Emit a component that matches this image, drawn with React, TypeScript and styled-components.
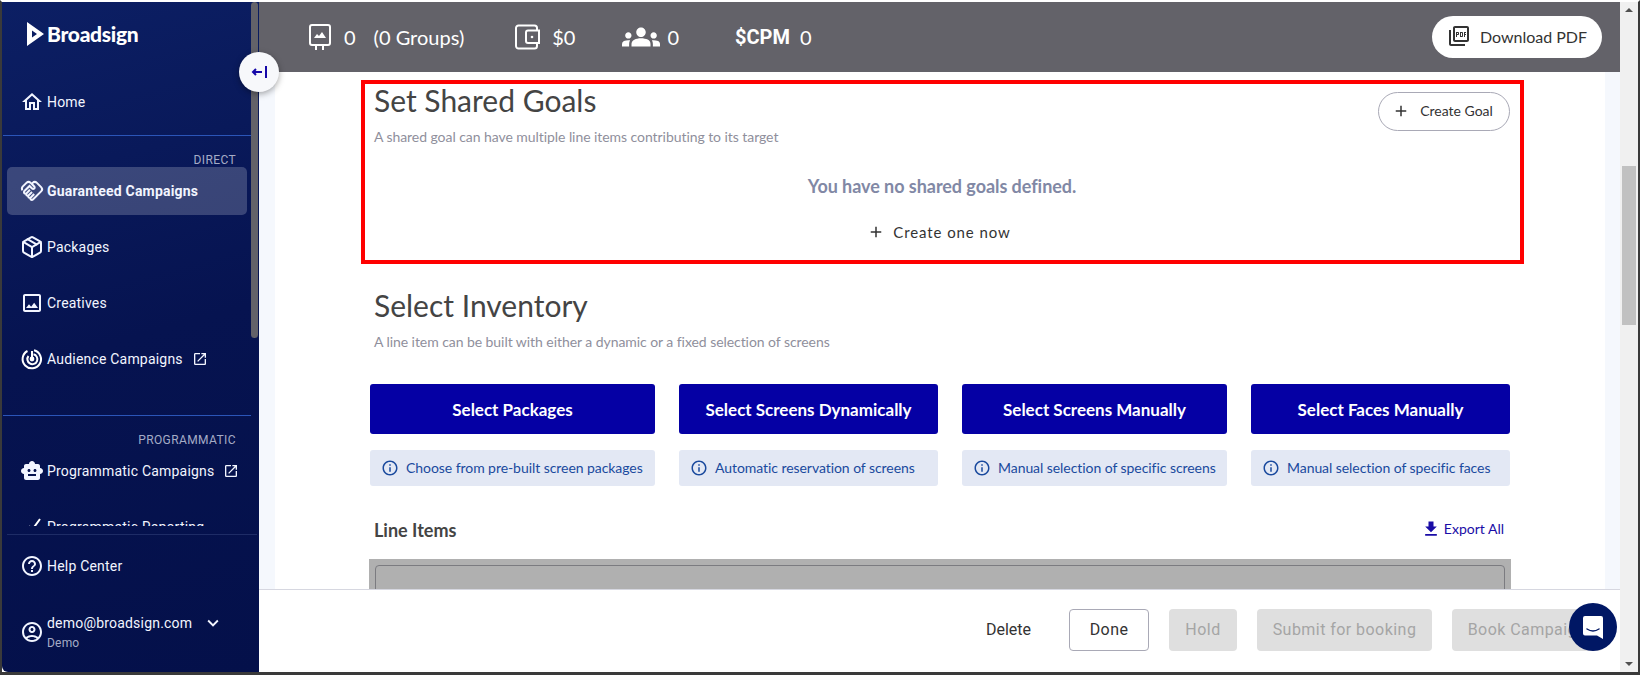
import React from 'react';
import styled, { createGlobalStyle } from 'styled-components';
import {
  MdAdd,
  MdDownload,
  MdExpandMore,
  MdGroups,
  MdHelpOutline,
  MdInfoOutline,
  MdOutlineAccountCircle,
  MdOutlineHandshake,
  MdOutlineHome,
  MdOutlineImage,
  MdOutlineOpenInNew,
  MdOutlinePictureAsPdf,
  MdSmartToy,
} from 'react-icons/md';
import { FiPackage } from 'react-icons/fi';

const GlobalStyle = createGlobalStyle`
  html, body {
    margin: 0;
    padding: 0;
    overflow: hidden;
    background: #fff;
  }
`;

const Window = styled.div`
  position: relative;
  box-sizing: border-box;
  width: 1640px;
  height: 675px;
  display: flex;
  background: #fff;
  border-top: 2px solid #fff;
  border-left: 2px solid #3a3a3a;
  border-right: 2px solid #3a3a3a;
  border-bottom: 3px solid #3a3a3a;
  overflow: hidden;
`;

const Sidebar = styled.aside`
  position: relative;
  flex: 0 0 257px;
  display: flex;
  flex-direction: column;
  color: #f2f5ff;
  font-family: Roboto, sans-serif;
  font-size: 14px;
  letter-spacing: 0.2px;
  background: linear-gradient(165deg, #0c1f64 0%, #061350 50%, #04104a 100%);
  border-bottom-left-radius: 6px;
`;

const SideThumb = styled.div`
  position: absolute;
  top: 0;
  right: 1px;
  width: 7px;
  height: 336px;
  border-radius: 4px;
  background: #636269;
`;

const Nav = styled.nav`
  flex: 0 0 524px;
  overflow: hidden;
`;

const LogoRow = styled.div`
  height: 76px;
  padding: 20px 0 0 25px;
  box-sizing: border-box;
  display: flex;
  align-items: flex-start;
  gap: 3px;
`;

const LogoText = styled.span`
  font-family: Lato, sans-serif;
  font-weight: 900;
  font-size: 21px;
  line-height: 24px;
  letter-spacing: -0.3px;
  color: #fff;
`;

const NavRow = styled.div<{ $active?: boolean }>`
  height: 48px;
  margin: 0 12px 8px 5px;
  padding-left: 13px;
  display: flex;
  align-items: center;
  gap: 3px;
  border-radius: 5px;
  background: ${({ $active }) => ($active ? 'rgba(255, 255, 255, 0.2)' : 'transparent')};
  font-weight: ${({ $active }) => ($active ? 700 : 400)};
  svg {
    flex: none;
  }
`;

const ExternalIcon = styled(MdOutlineOpenInNew)`
  margin-left: 6px;
`;

const Divider = styled.div<{ $top: number }>`
  height: 1px;
  margin: ${({ $top }) => $top}px 8px 0 1px;
  background: #2b55b8;
`;

const SectionLabel = styled.div<{ $top: number }>`
  height: 15px;
  line-height: 16px;
  margin-top: ${({ $top }) => $top}px;
  padding-right: 23px;
  text-align: right;
  font-size: 12px;
  letter-spacing: 0.4px;
  color: #a5acc6;
`;

const SideFooter = styled.div`
  flex: 1;
  margin-top: 8px;
  border-top: 1px solid #1e2c66;
  margin-left: 5px;
  margin-right: 2px;
`;

const HelpRow = styled.div`
  height: 48px;
  margin-top: 7px;
  padding-left: 13px;
  display: flex;
  align-items: center;
  gap: 3px;
`;

const UserRow = styled.div`
  margin-top: 22px;
  padding-left: 13px;
  display: flex;
  align-items: center;
  gap: 3px;
`;

const UserText = styled.div`
  display: flex;
  flex-direction: column;
  gap: 1px;
`;

const UserEmail = styled.div`
  display: flex;
  align-items: center;
  gap: 10px;
  line-height: 16px;
`;

const UserRole = styled.div`
  font-size: 12px;
  line-height: 16px;
  color: #a5acc6;
`;

const CollapseButton = styled.div`
  position: absolute;
  left: 237px;
  top: 50px;
  width: 40px;
  height: 40px;
  border-radius: 50%;
  background: #f7f8fb;
  box-shadow: 0 2px 6px rgba(0, 0, 0, 0.35);
  display: flex;
  align-items: center;
  justify-content: center;
  z-index: 3;
`;

const Main = styled.main`
  flex: 1;
  min-width: 0;
  display: flex;
  flex-direction: column;
`;

const TopBar = styled.header`
  flex: 0 0 70px;
  display: flex;
  align-items: center;
  padding: 0 18px 0 50px;
  background: #636269;
  color: #fff;
  font-family: Lato, sans-serif;
  font-size: 20px;
`;

const Stat = styled.div<{ $left: number; $gap: number }>`
  display: flex;
  align-items: center;
  gap: ${({ $gap }) => $gap}px;
  margin-left: ${({ $left }) => $left}px;
`;

const CpmLabel = styled.span`
  font-family: Roboto, sans-serif;
  font-weight: 700;
`;

const PdfButton = styled.button`
  margin-left: auto;
  width: 170px;
  height: 42px;
  padding: 0 0 2px;
  display: flex;
  align-items: center;
  justify-content: center;
  gap: 9px;
  border: 0;
  border-radius: 21px;
  background: #fff;
  color: #333;
  font-family: Lato, sans-serif;
  font-size: 16px;
`;

const Content = styled.div`
  flex: 1;
  min-height: 0;
  overflow: hidden;
  background: #f5f8fd;
  padding: 0 15px 0 16px;
`;

const Sheet = styled.div`
  height: 100%;
  box-sizing: border-box;
  background: #fff;
  padding: 8px 0 0 86px;
  overflow: hidden;
`;

const GoalsBox = styled.section`
  box-sizing: border-box;
  width: 1163px;
  height: 184px;
  border: 4px solid #f00;
  padding: 0 10px 0 9px;
`;

const GoalsHeader = styled.div`
  display: flex;
  justify-content: space-between;
  align-items: flex-start;
`;

const Title = styled.h2`
  margin: 0;
  font-family: Lato, sans-serif;
  font-weight: 400;
  font-size: 30px;
  line-height: 32px;
  color: #444;
`;

const Subtitle = styled.p`
  margin: 12px 0 0;
  font-family: Lato, sans-serif;
  font-size: 14px;
  line-height: 18px;
  letter-spacing: -0.06px;
  color: #8f8f9c;
`;

const GoalButton = styled.button`
  box-sizing: border-box;
  width: 132px;
  height: 39px;
  margin-top: 8px;
  padding: 0 3px 2px 0;
  display: flex;
  align-items: center;
  justify-content: center;
  gap: 10px;
  background: #fff;
  border: 1px solid #a9a9b6;
  border-radius: 20px;
  color: #333;
  font-family: Lato, sans-serif;
  font-size: 14px;
`;

const EmptyMessage = styled.div`
  margin-top: 28px;
  text-align: center;
  font-family: Lato, sans-serif;
  font-weight: 700;
  font-size: 18px;
  line-height: 24px;
  letter-spacing: -0.05px;
  color: #8188a5;
`;

const CreateLink = styled.div`
  margin-top: 22px;
  padding-right: 6px;
  display: flex;
  justify-content: center;
  align-items: center;
  gap: 8px;
  font-family: Lato, sans-serif;
  font-size: 15px;
  line-height: 24px;
  letter-spacing: 0.9px;
  color: #333;
`;

const Inventory = styled.section`
  margin-left: 8px;
  width: 1142px;
`;

const InventoryHead = styled.div`
  padding: 25px 0 0 5px;
`;

const OptionGrid = styled.div`
  display: grid;
  grid-template-columns: 285px 259px 265px 259px;
  column-gap: 24px;
  row-gap: 16px;
  margin: 33px 0 0 1px;
`;

const SelectButton = styled.button`
  height: 50px;
  border: 0;
  border-radius: 3px;
  background: #0500a4;
  color: #fff;
  font-family: Lato, sans-serif;
  font-weight: 700;
  font-size: 17px;
`;

const OptionHint = styled.div`
  height: 36px;
  padding: 0 0 1px 11px;
  box-sizing: border-box;
  display: flex;
  align-items: center;
  gap: 7px;
  border-radius: 3px;
  background: #e3e8f4;
  color: #1a4a9e;
  font-family: Lato, sans-serif;
  font-size: 14px;
  letter-spacing: -0.06px;
  white-space: nowrap;
`;

const LineItemsHead = styled.div`
  height: 24px;
  margin-top: 32px;
  padding: 0 7px 0 5px;
  display: flex;
  align-items: center;
  justify-content: space-between;
`;

const LineItemsTitle = styled.h3`
  margin: 0;
  font-family: Lato, sans-serif;
  font-weight: 700;
  font-size: 18px;
  color: #444;
`;

const ExportLink = styled.a`
  padding-bottom: 3px;
  display: flex;
  align-items: center;
  gap: 3px;
  font-family: Lato, sans-serif;
  font-size: 14px;
  color: #1a0ca6;
`;

const LineItemsPanel = styled.div`
  margin-top: 17px;
  height: 60px;
  padding: 6px 6px 0;
  background: #b0b0b0;
`;

const PanelCard = styled.div`
  height: 100%;
  border: 1px solid #7b7b80;
  border-radius: 4px;
`;

const ActionBar = styled.footer`
  flex: 0 0 83px;
  box-sizing: border-box;
  display: flex;
  align-items: flex-start;
  padding: 19px 0 0 709px;
  background: #fff;
  border-top: 1px solid #d6d7e0;
  font-family: Roboto, sans-serif;
  font-size: 16px;
  overflow: hidden;
`;

const ActionButton = styled.button<{ $variant: 'plain' | 'outline' | 'disabled'; $width: number }>`
  flex: none;
  box-sizing: border-box;
  width: ${({ $width }) => $width}px;
  height: 42px;
  margin-right: 20px;
  padding: 0 0 1px;
  border-radius: 4px;
  font: inherit;
  letter-spacing: ${({ $variant }) => ($variant === 'plain' ? '0' : '0.45px')};
  border: ${({ $variant }) => ($variant === 'outline' ? '1px solid #a9a9b6' : '0')};
  background: ${({ $variant }) =>
    $variant === 'disabled' ? '#dfdfdf' : $variant === 'outline' ? '#fff' : 'transparent'};
  color: ${({ $variant }) => ($variant === 'disabled' ? '#a5a5a5' : '#333')};
`;

const ChatBubble = styled.div`
  position: absolute;
  left: 1567px;
  top: 601px;
  width: 48px;
  height: 48px;
  border-radius: 50%;
  background: #001764;
  display: flex;
  align-items: center;
  justify-content: center;
  z-index: 3;
`;

const PageScroll = styled.div`
  position: relative;
  flex: 0 0 18px;
  background: #f0f0f0;
`;

const ScrollThumb = styled.div`
  position: absolute;
  left: 2px;
  right: 2px;
  top: 164px;
  height: 159px;
  background: #c1c1c1;
`;

const ScrollArrow = styled.div<{ $down?: boolean }>`
  position: absolute;
  left: 5px;
  width: 0;
  height: 0;
  border-left: 4px solid transparent;
  border-right: 4px solid transparent;
  ${({ $down }) =>
    $down
      ? 'bottom: 6px; border-top: 4px solid #505050;'
      : 'top: 6px; border-bottom: 4px solid #505050;'}
`;

const LogoMark = () => (
  <svg width="17" height="24" viewBox="0 0 17 24">
    <path fill="#fff" fillRule="evenodd" d="M0 0 L17 12 L0 24 Z M5 8.5 V15.5 L10 12 Z" />
  </svg>
);

const CollapseIcon = () => (
  <svg width="18" height="14" viewBox="0 0 18 14">
    <path fill="none" stroke="#1608a8" strokeWidth="2" d="M3 7 H12 M6 4 L3 7 L6 10" />
    <path stroke="#1608a8" strokeWidth="2" d="M16 1 V13" />
  </svg>
);

const AudienceIcon = () => (
  <svg width="24" height="24" viewBox="-1 -1 24 24" fill="none" stroke="#fff" strokeWidth="2">
    <path d="M13 2.2 A9.2 9.2 0 1 1 6.5 3" />
    <path d="M12.5 6.3 A5 5 0 1 1 7.5 8" />
    <path d="M11 3 V11" />
    <circle cx="11" cy="11" r="1.4" fill="#fff" />
  </svg>
);

const ReportingIcon = () => (
  <svg width="24" height="24" viewBox="0 0 24 24" fill="none" stroke="#fff" strokeWidth="2">
    <path d="M4 15 L5 15 M9 11 L12 15 L20 4" />
    <path d="M4 20 H20" />
  </svg>
);

const ScreenIcon = () => (
  <svg width="22" height="27" viewBox="0 0 22 27" fill="none">
    <rect x="1" y="1" width="20" height="20" rx="2" stroke="#fff" strokeWidth="2" />
    <path fill="#fff" d="M5 14 L8 10 L10 12 L13 8 L17 14 Z" />
    <path stroke="#fff" strokeWidth="2" d="M7 22 V26 M14 22 V26" />
  </svg>
);

const WalletIcon = () => (
  <svg width="25" height="26" viewBox="0 0 25 26" fill="none" stroke="#fff" strokeWidth="2">
    <path d="M22 6 V4 A2.5 2.5 0 0 0 19.5 1.5 H3.5 A2.5 2.5 0 0 0 1 4 V22 A2.5 2.5 0 0 0 3.5 24.5 H19.5 A2.5 2.5 0 0 0 22 22 V19" />
    <path d="M24 6.5 H13 A2 2 0 0 0 11 8.5 V17 A2 2 0 0 0 13 19 H24 Z" />
    <circle cx="17" cy="13" r="1.3" fill="#fff" stroke="none" />
  </svg>
);

const ChatIcon = () => (
  <svg width="22" height="25" viewBox="0 0 22 25">
    <path fill="#fff" d="M3 1 H19 A2 2 0 0 1 21 3 V24 L15 20.5 H3 A2 2 0 0 1 1 18.5 V3 A2 2 0 0 1 3 1 Z" />
    <path fill="none" stroke="#001764" strokeWidth="1.5" strokeLinecap="round" d="M5 14 Q11 18 17 14" />
  </svg>
);

const optionList = [
  { label: 'Select Packages', hint: 'Choose from pre-built screen packages' },
  { label: 'Select Screens Dynamically', hint: 'Automatic reservation of screens' },
  { label: 'Select Screens Manually', hint: 'Manual selection of specific screens' },
  { label: 'Select Faces Manually', hint: 'Manual selection of specific faces' },
];

const App: React.FC = () => {
  return (
    <Window>
      <GlobalStyle />
      <Sidebar>
        <Nav>
          <LogoRow>
            <LogoMark />
            <LogoText>Broadsign</LogoText>
          </LogoRow>
          <NavRow>
            <MdOutlineHome size={24} />
            Home
          </NavRow>
          <Divider $top={9} />
          <SectionLabel $top={16}>DIRECT</SectionLabel>
          <NavRow $active>
            <MdOutlineHandshake size={24} />
            Guaranteed Campaigns
          </NavRow>
          <NavRow>
            <FiPackage size={24} />
            Packages
          </NavRow>
          <NavRow>
            <MdOutlineImage size={24} />
            Creatives
          </NavRow>
          <NavRow>
            <AudienceIcon />
            Audience Campaigns
            <ExternalIcon size={16} />
          </NavRow>
          <Divider $top={32} />
          <SectionLabel $top={16}>PROGRAMMATIC</SectionLabel>
          <NavRow>
            <MdSmartToy size={24} />
            Programmatic Campaigns
            <ExternalIcon size={16} />
          </NavRow>
          <NavRow>
            <ReportingIcon />
            Programmatic Reporting
          </NavRow>
        </Nav>
        <SideFooter>
          <HelpRow>
            <MdHelpOutline size={24} />
            Help Center
          </HelpRow>
          <UserRow>
            <MdOutlineAccountCircle size={24} />
            <UserText>
              <UserEmail>
                demo@broadsign.com
                <MdExpandMore size={22} />
              </UserEmail>
              <UserRole>Demo</UserRole>
            </UserText>
          </UserRow>
        </SideFooter>
        <SideThumb />
      </Sidebar>
      <CollapseButton>
        <CollapseIcon />
      </CollapseButton>
      <Main>
        <TopBar>
          <Stat $left={0} $gap={13}>
            <ScreenIcon />
            <span>0</span>
          </Stat>
          <Stat $left={18} $gap={0}>
            <span>(0 Groups)</span>
          </Stat>
          <Stat $left={51} $gap={12}>
            <WalletIcon />
            <span>$0</span>
          </Stat>
          <Stat $left={47} $gap={7}>
            <MdGroups size={38} />
            <span>0</span>
          </Stat>
          <Stat $left={56} $gap={10}>
            <CpmLabel>$CPM</CpmLabel>
            <span>0</span>
          </Stat>
          <PdfButton>
            <MdOutlinePictureAsPdf size={24} />
            Download PDF
          </PdfButton>
        </TopBar>
        <Content>
          <Sheet>
            <GoalsBox>
              <GoalsHeader>
                <div>
                  <Title>Set Shared Goals</Title>
                  <Subtitle>A shared goal can have multiple line items contributing to its target</Subtitle>
                </div>
                <GoalButton>
                  <MdAdd size={18} />
                  Create Goal
                </GoalButton>
              </GoalsHeader>
              <EmptyMessage>You have no shared goals defined.</EmptyMessage>
              <CreateLink>
                <MdAdd size={18} />
                Create one now
              </CreateLink>
            </GoalsBox>
            <Inventory>
              <InventoryHead>
                <Title>Select Inventory</Title>
                <Subtitle>A line item can be built with either a dynamic or a fixed selection of screens</Subtitle>
              </InventoryHead>
              <OptionGrid>
                {optionList.map((option) => (
                  <SelectButton key={option.label}>{option.label}</SelectButton>
                ))}
                {optionList.map((option) => (
                  <OptionHint key={option.hint}>
                    <MdInfoOutline size={18} />
                    {option.hint}
                  </OptionHint>
                ))}
              </OptionGrid>
              <LineItemsHead>
                <LineItemsTitle>Line Items</LineItemsTitle>
                <ExportLink>
                  <MdDownload size={20} />
                  Export All
                </ExportLink>
              </LineItemsHead>
              <LineItemsPanel>
                <PanelCard />
              </LineItemsPanel>
            </Inventory>
          </Sheet>
        </Content>
        <ActionBar>
          <ActionButton $variant="plain" $width={81}>Delete</ActionButton>
          <ActionButton $variant="outline" $width={80}>Done</ActionButton>
          <ActionButton $variant="disabled" $width={68}>Hold</ActionButton>
          <ActionButton $variant="disabled" $width={175}>Submit for booking</ActionButton>
          <ActionButton $variant="disabled" $width={150}>Book Campaign</ActionButton>
        </ActionBar>
      </Main>
      <ChatBubble>
        <ChatIcon />
      </ChatBubble>
      <PageScroll>
        <ScrollArrow />
        <ScrollThumb />
        <ScrollArrow $down />
      </PageScroll>
    </Window>
  );
};

export default App;
